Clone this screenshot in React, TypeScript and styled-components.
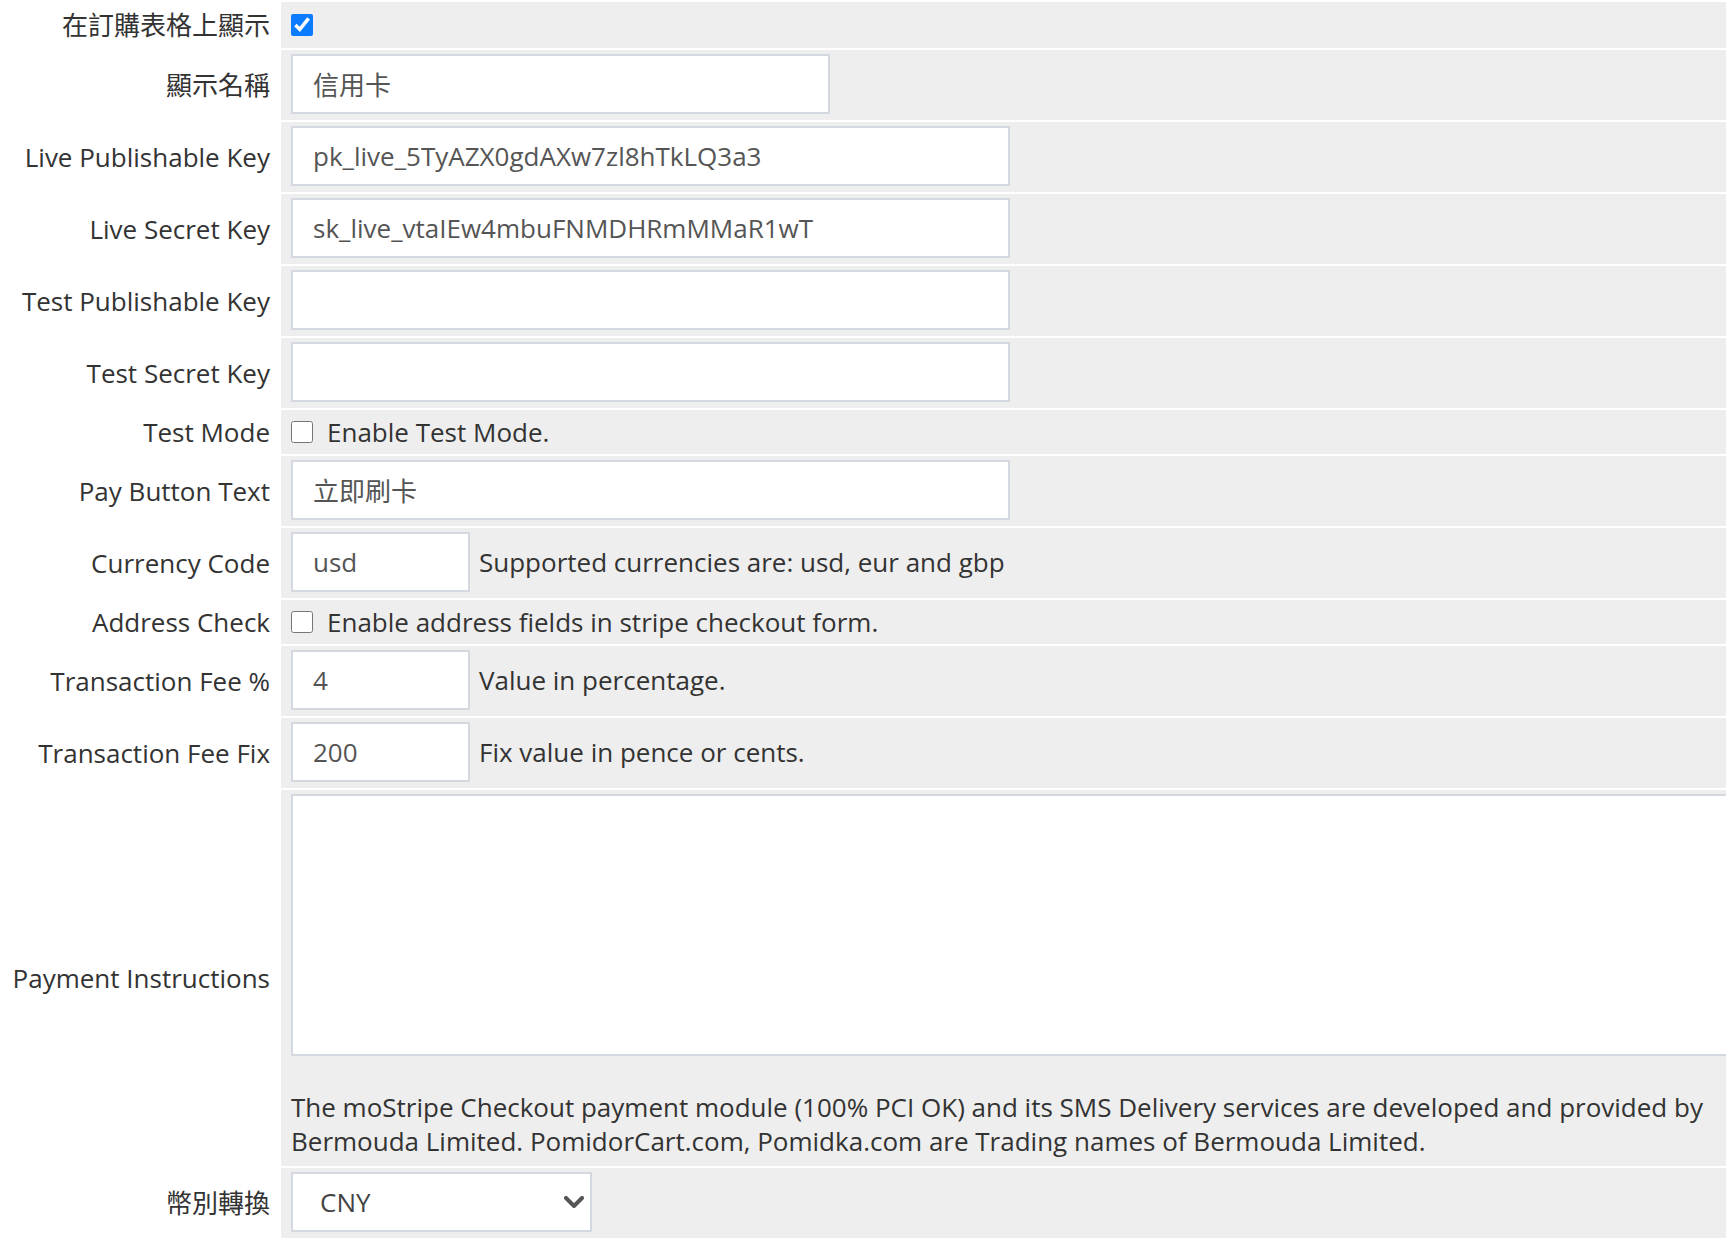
import styled, { createGlobalStyle } from "styled-components";

const GlobalStyle = createGlobalStyle`
    html, body {
        margin: 0;
        padding: 0;
        background: #ffffff;
        overflow: hidden;
    }
    body {
        font-family: "Open Sans", "Noto Sans CJK TC", sans-serif;
        font-size: 26px;
        color: #333333;
    }
`

type Field =
    | { kind: "check"; label: string; checked?: boolean; text?: string; tall?: boolean }
    | { kind: "text"; label: string; value: string; size: "wide" | "medium" | "small"; help?: string }

const fields: Field[] = [
    { kind: "check", label: "在訂購表格上顯示", checked: true, tall: true },
    { kind: "text", label: "顯示名稱", value: "信用卡", size: "medium" },
    { kind: "text", label: "Live Publishable Key", value: "pk_live_5TyAZX0gdAXw7zl8hTkLQ3a3", size: "wide" },
    { kind: "text", label: "Live Secret Key", value: "sk_live_vtaIEw4mbuFNMDHRmMMaR1wT", size: "wide" },
    { kind: "text", label: "Test Publishable Key", value: "", size: "wide" },
    { kind: "text", label: "Test Secret Key", value: "", size: "wide" },
    { kind: "check", label: "Test Mode", text: "Enable Test Mode." },
    { kind: "text", label: "Pay Button Text", value: "立即刷卡", size: "wide" },
    { kind: "text", label: "Currency Code", value: "usd", size: "small", help: "Supported currencies are: usd, eur and gbp" },
    { kind: "check", label: "Address Check", text: "Enable address fields in stripe checkout form." },
    { kind: "text", label: "Transaction Fee %", value: "4", size: "small", help: "Value in percentage." },
    { kind: "text", label: "Transaction Fee Fix", value: "200", size: "small", help: "Fix value in pence or cents." },
]

const widths = { wide: 719, medium: 539, small: 179 }

const App = () => {
    return (
        <>
            <GlobalStyle />
            <SettingsTable>
                <colgroup>
                    <col style={{ width: 281 }} />
                    <col />
                </colgroup>
                <tbody>
                    {fields.map((f) => (
                        <Row
                            key={f.label}
                            height={f.kind === "check" ? (f.tall ? 46 : 44) : 70}
                        >
                            <Label>{f.label}</Label>
                            {f.kind === "check" ? (
                                <Cell compact>
                                    <CheckLine>
                                        <Check type="checkbox" defaultChecked={f.checked} />
                                        {f.text && <span>{f.text}</span>}
                                    </CheckLine>
                                </Cell>
                            ) : (
                                <Cell>
                                    <FieldLine>
                                        <TextInput
                                            type="text"
                                            defaultValue={f.value}
                                            style={{ width: widths[f.size] }}
                                        />
                                        {f.help && <Help>{f.help}</Help>}
                                    </FieldLine>
                                </Cell>
                            )}
                        </Row>
                    ))}
                    <Row>
                        <Label>Payment Instructions</Label>
                        <Cell tall>
                            <Instructions />
                            <Notice>
                                The moStripe Checkout payment module (100% PCI OK) and its SMS Delivery services are developed and provided by
                                <br />
                                Bermouda Limited. PomidorCart.com, Pomidka.com are Trading names of Bermouda Limited.
                            </Notice>
                        </Cell>
                    </Row>
                    <Row height={70}>
                        <Label>幣別轉換</Label>
                        <Cell>
                            <SelectWrap>
                                <Select defaultValue="CNY">
                                    <option>CNY</option>
                                    <option>USD</option>
                                    <option>EUR</option>
                                </Select>
                                <Chevron viewBox="0 0 20 12" aria-hidden="true">
                                    <path d="M2 2 L10 10 L18 2" fill="none" stroke="#555" strokeWidth="4" strokeLinecap="round" strokeLinejoin="round" />
                                </Chevron>
                            </SelectWrap>
                        </Cell>
                    </Row>
                </tbody>
            </SettingsTable>
        </>
    )
}

const SettingsTable = styled.table`
    width: 100%;
    table-layout: fixed;
    border-collapse: separate;
    border-spacing: 0 2px;
    margin-top: 0;
`

const Row = styled.tr<{ height?: number }>`
    height: ${(props) => (props.height ? `${props.height}px` : "auto")};
`

const Label = styled.th`
    text-align: right;
    font-weight: 400;
    padding: 0 11px 0 0;
    vertical-align: middle;
    white-space: nowrap;
    color: #333333;
    line-height: 34px;
`

const Cell = styled.td<{ compact?: boolean; tall?: boolean }>`
    background: #eeeeee;
    padding: ${(props) =>
        props.compact ? "0 10px" : props.tall ? "4px 10px 8px" : "4px 10px 6px"};
    vertical-align: middle;
    line-height: 34px;
    overflow: visible;
`

const CheckLine = styled.label`
    display: flex;
    align-items: center;
    gap: 14px;
    color: #333333;
`

const Check = styled.input`
    width: 22px;
    height: 22px;
    margin: 0;
    accent-color: #0b7bff;
`

const FieldLine = styled.div`
    display: flex;
    align-items: center;
    gap: 9px;
`

const TextInput = styled.input`
    box-sizing: border-box;
    height: 60px;
    padding: 0 20px;
    border: 2px solid #d4d8e0;
    border-radius: 0;
    background: #ffffff;
    font: inherit;
    color: #555555;
    outline: none;
`

const Help = styled.span`
    color: #333333;
    white-space: nowrap;
`

const Instructions = styled.textarea`
    display: block;
    box-sizing: border-box;
    width: 1600px;
    height: 262px;
    border: 2px solid #d4d8e0;
    border-radius: 0;
    background: #ffffff;
    resize: none;
    font: inherit;
    outline: none;
`

const Notice = styled.p`
    margin: 34px 0 0;
    line-height: 34px;
    color: #333333;
    white-space: nowrap;
`

const SelectWrap = styled.div`
    position: relative;
    width: 301px;
`

const Select = styled.select`
    appearance: none;
    box-sizing: border-box;
    width: 301px;
    height: 60px;
    padding: 0 40px 0 27px;
    border: 2px solid #d4d8e0;
    border-radius: 0;
    background: #ffffff;
    font: inherit;
    color: #444444;
    outline: none;
`

const Chevron = styled.svg`
    position: absolute;
    right: 8px;
    top: 24px;
    width: 20px;
    height: 12px;
    pointer-events: none;
`

export default App
